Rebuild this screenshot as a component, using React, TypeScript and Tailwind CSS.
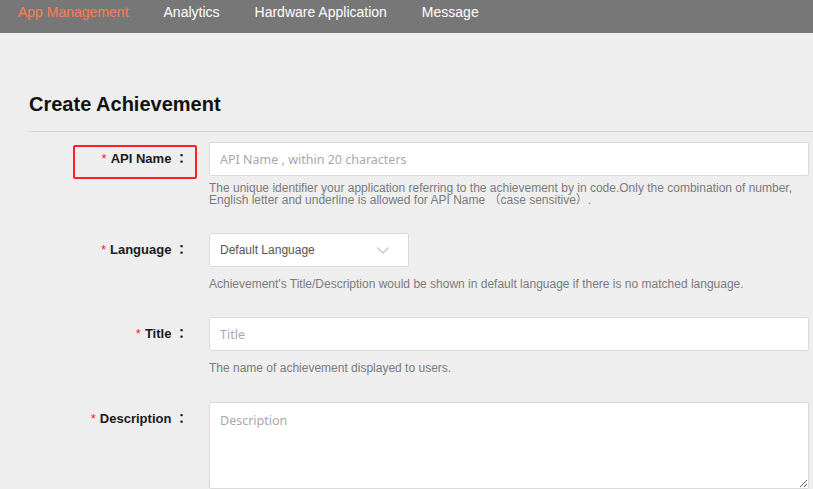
import React from 'react';

const navItems = ['App Management', 'Analytics', 'Hardware Application', 'Message'];

function FormRow({
    label,
    highlight = false,
    helpClass = 'mt-[11px]',
    rowClass = 'pb-[27px]',
    help,
    children,
}: {
    label: string;
    highlight?: boolean;
    helpClass?: string;
    rowClass?: string;
    help?: React.ReactNode;
    children: React.ReactNode;
}) {
    return (
        <div className={`flex ${rowClass}`}>
            {/* Label */}
            <div className="relative h-[34px] w-[180px] shrink-0 pr-[21px] text-right font-['Liberation_Sans','Noto_Sans_CJK_TC',sans-serif] text-[13px] font-bold leading-[34px] text-[#1a1a1a]">
                <span className="mr-[4px] font-normal text-[#f5222d]">*</span>
                {label} ：
                {highlight && (
                    <div className="absolute left-[44px] top-[3px] h-[34px] w-[124px] rounded-[2px] border-2 border-[#ff2121]" />
                )}
            </div>
            {/* Field */}
            <div className="min-w-0 flex-1">
                {children}
                {help && (
                    <p className={`${helpClass} text-[12px] leading-[12px] text-[#7b7b7b]`}>{help}</p>
                )}
            </div>
        </div>
    );
}

const inputClass =
    "h-[34px] w-full rounded-[2px] border border-[#dadada] bg-white px-[10px] font-['Noto_Sans','Noto_Sans_CJK_TC',sans-serif] text-[12.5px] text-[#333] outline-none placeholder:text-[#a8a8a8]";

export default function App() {
    return (
        <div className="min-h-screen bg-[#eeeeee] font-['Liberation_Sans','Noto_Sans_CJK_SC',Arial,sans-serif]">
            {/* Top navigation */}
            <nav className="flex h-[33px] gap-[35px] bg-[#777777] pl-[18px] pt-[2px] text-[14px] leading-[20px]">
                {navItems.map((item, i) => (
                    <span key={item} className={i === 0 ? 'text-[#fa7f56]' : 'text-white'}>
                        {item}
                    </span>
                ))}
            </nav>

            <div className="pl-[29px] pt-[57px]">
                {/* Header */}
                <h1 className="border-b border-[#d4d4d4] pb-[13px] text-[20px] font-bold leading-[28px] text-[#111]">
                    Create Achievement
                </h1>

                {/* Form */}
                <div className="pr-[4px] pt-[10px]">
                    <FormRow
                        label="API Name"
                        highlight
                        helpClass="mt-[6px]"
                        help="The unique identifier your application referring to the achievement by in code.Only the combination of number, English letter and underline is allowed for API Name （case sensitive）."
                    >
                        <input className={inputClass} placeholder="API Name , within 20 characters" />
                    </FormRow>

                    <FormRow
                        label="Language"
                        help="Achievement's Title/Description would be shown in default language if there is no matched language."
                    >
                        <div className="flex h-[34px] w-[200px] items-center justify-between rounded-[2px] border border-[#dadada] bg-white pl-[10px] pr-[19px] text-[12px] text-[#555]">
                            <span>Default Language</span>
                            <svg width="12" height="7" viewBox="0 0 12 7" fill="none">
                                <polyline points="0.5,0.5 6,6 11.5,0.5" stroke="#c4c4c4" strokeWidth="1.3" />
                            </svg>
                        </div>
                    </FormRow>

                    <FormRow label="Title" rowClass="pb-[28px]" help="The name of achievement displayed to users.">
                        <input className={inputClass} placeholder="Title" />
                    </FormRow>

                    <FormRow label="Description">
                        <textarea
                            className="block h-[87px] w-full rounded-[2px] border border-[#dadada] bg-white px-[10px] pt-[8px] font-['Noto_Sans','Noto_Sans_CJK_TC',sans-serif] text-[12.5px] leading-[20px] text-[#333] outline-none placeholder:text-[#a8a8a8]"
                            placeholder="Description"
                        />
                    </FormRow>
                </div>
            </div>
        </div>
    );
}
